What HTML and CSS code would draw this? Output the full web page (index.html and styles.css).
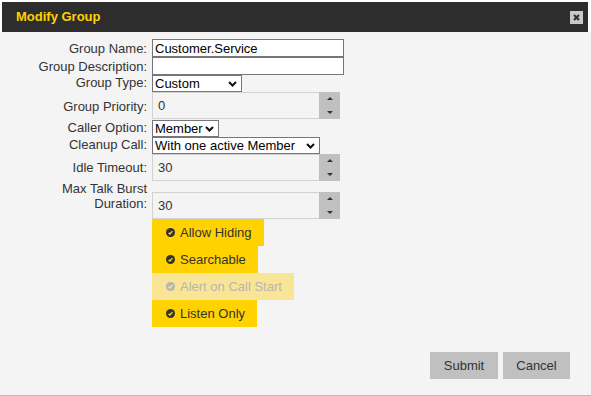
FILE: index.html
```html
<!DOCTYPE html>
<html lang="en">
<head>
    <meta charset="UTF-8">
    <title>Modify Group</title>
    <link rel="stylesheet" href="styles.css">
</head>
<body>

<div class="dialog">
    <div class="titlebar">
        <span class="title">Modify Group</span>
        <button class="close" title="Close">
            <svg width="13" height="13" viewBox="0 0 13 13"><path d="M4 4 L9 9 M9 4 L4 9" stroke="#333" stroke-width="2.2" fill="none"/></svg>
        </button>
    </div>

    <div class="content">
        <div class="form">
            <label class="lbl" for="gname">Group Name:</label>
            <div class="ctl"><input class="text" id="gname" type="text" value="Customer.Service"></div>

            <label class="lbl" for="gdesc">Group Description:</label>
            <div class="ctl"><input class="text" id="gdesc" type="text" value=""></div>

            <label class="lbl row-sel">Group Type:</label>
            <div class="ctl row-sel">
                <span class="sel sel-type">
                    <select><option>Custom</option></select>
                    <svg class="chev" width="9" height="6" viewBox="0 0 9 6"><path d="M1 1 L4.5 4.5 L8 1" stroke="#111" stroke-width="2" fill="none"/></svg>
                </span>
            </div>

            <label class="lbl">Group Priority:</label>
            <div class="ctl">
                <div class="spin spin-gap">
                    <input type="text" value="0">
                    <span class="arrows"><span><i class="up"></i></span><span><i class="down"></i></span></span>
                </div>
            </div>

            <label class="lbl row-sel">Caller Option:</label>
            <div class="ctl row-sel">
                <span class="sel sel-caller">
                    <select><option>Member</option></select>
                    <svg class="chev" width="9" height="6" viewBox="0 0 9 6"><path d="M1 1 L4.5 4.5 L8 1" stroke="#111" stroke-width="2" fill="none"/></svg>
                </span>
            </div>

            <label class="lbl row-sel">Cleanup Call:</label>
            <div class="ctl row-sel">
                <span class="sel sel-cleanup">
                    <select><option>With one active Member</option></select>
                    <svg class="chev" width="9" height="6" viewBox="0 0 9 6"><path d="M1 1 L4.5 4.5 L8 1" stroke="#111" stroke-width="2" fill="none"/></svg>
                </span>
            </div>

            <label class="lbl">Idle Timeout:</label>
            <div class="ctl">
                <div class="spin">
                    <input type="text" value="30">
                    <span class="arrows"><span><i class="up"></i></span><span><i class="down"></i></span></span>
                </div>
            </div>

            <label class="lbl lbl-two">Max Talk Burst<br>Duration:</label>
            <div class="ctl ctl-low">
                <div class="spin">
                    <input type="text" value="30">
                    <span class="arrows"><span><i class="up"></i></span><span><i class="down"></i></span></span>
                </div>
            </div>

            <div class="options">
                <div class="opt">
                    <svg class="tick" width="9" height="9" viewBox="0 0 9 9"><circle cx="4.5" cy="4.5" r="4.5" fill="#333"/><path d="M2.6 4.9 L3.9 6 L6.4 3.1" stroke="#ffd200" stroke-width="1.4" fill="none"/></svg>
                    Allow Hiding
                </div>
                <div class="opt">
                    <svg class="tick" width="9" height="9" viewBox="0 0 9 9"><circle cx="4.5" cy="4.5" r="4.5" fill="#333"/><path d="M2.6 4.9 L3.9 6 L6.4 3.1" stroke="#ffd200" stroke-width="1.4" fill="none"/></svg>
                    Searchable
                </div>
                <div class="opt off">
                    <svg class="tick" width="9" height="9" viewBox="0 0 9 9"><circle cx="4.5" cy="4.5" r="4.5" fill="#b9b6ad"/><path d="M2.6 4.9 L3.9 6 L6.4 3.1" stroke="#f9e596" stroke-width="1.4" fill="none"/></svg>
                    Alert on Call Start
                </div>
                <div class="opt">
                    <svg class="tick" width="9" height="9" viewBox="0 0 9 9"><circle cx="4.5" cy="4.5" r="4.5" fill="#333"/><path d="M2.6 4.9 L3.9 6 L6.4 3.1" stroke="#ffd200" stroke-width="1.4" fill="none"/></svg>
                    Listen Only
                </div>
            </div>
        </div>

        <div class="buttons">
            <button class="btn btn-submit">Submit</button>
            <button class="btn btn-cancel">Cancel</button>
        </div>
    </div>
</div>

</body>
</html>
```

FILE: styles.css
```css
body {
    margin: 0;
    background: #fff;
    font-family: "Liberation Sans", Arial, sans-serif;
    font-size: 13px;
    color: #333;
}

.dialog {
    width: 591px;
    height: 396px;
    display: flex;
    flex-direction: column;
}

/* dark title bar */
.titlebar {
    margin: 2px 3px 0 2px;
    height: 30px;
    background: #2d2d2d;
    display: flex;
    align-items: center;
    justify-content: space-between;
    padding: 0 5px 0 14px;
}

.title {
    color: #ffd200;
    font-weight: bold;
    font-size: 13px;
    line-height: 30px;
}

.close {
    width: 13px;
    height: 13px;
    padding: 0;
    border: none;
    background: #c9c9c9;
    display: flex;
}

.content {
    flex: 1;
    background: #f4f4f4;
    border-bottom: 1px solid #bcbcbc;
    display: flex;
    flex-direction: column;
    padding-bottom: 16px;
}

.form {
    margin-top: 7px;
    display: grid;
    grid-template-columns: 147px max-content;
    column-gap: 5px;
    align-items: center;
}

.lbl {
    text-align: right;
    line-height: 15px;
    color: #333;
}

.lbl-two {
    align-self: start;
}

.ctl {
    display: flex;
    align-items: center;
}

.row-sel {
    height: 17px;
}

.ctl-low {
    padding-top: 11px;
}

input.text {
    width: 192px;
    height: 18px;
    box-sizing: border-box;
    margin: 0;
    padding: 0 2px;
    border: 1px solid #767676;
    background: #fff;
    font-family: inherit;
    font-size: 13px;
    color: #000;
}

/* selects with the chevron drawn over them */
.sel {
    position: relative;
    display: inline-block;
}

.sel select {
    appearance: none;
    -webkit-appearance: none;
    height: 17px;
    box-sizing: border-box;
    margin: 0;
    padding: 0 0 0 2px;
    border: 1px solid #767676;
    border-radius: 0;
    background: #fff;
    font-family: inherit;
    font-size: 13px;
    line-height: 15px;
    color: #000;
    display: block;
}

.sel-type select { width: 90px; }
.sel-caller select { width: 67px; }
.sel-cleanup select { width: 168px; }

.chev {
    position: absolute;
    right: 5px;
    top: 6px;
    pointer-events: none;
}

/* number fields with grey spinner */
.spin {
    width: 188px;
    height: 27px;
    box-sizing: border-box;
    border: 1px solid #d2d2d2;
    border-right: none;
    background: #f4f4f4;
    display: flex;
}

.spin-gap {
    margin-bottom: 1px;
}

.spin input {
    flex: 1;
    min-width: 0;
    border: none;
    background: transparent;
    padding: 0 5px;
    margin: 0;
    font-family: inherit;
    font-size: 13px;
    color: #333;
    outline: none;
}

.arrows {
    width: 21px;
    margin: -1px 0;
    background: #c0c0c0;
    display: flex;
    flex-direction: column;
}

.arrows span {
    flex: 1;
    display: flex;
    align-items: center;
    justify-content: center;
}

.up {
    width: 0;
    height: 0;
    border-left: 3px solid transparent;
    border-right: 3px solid transparent;
    border-bottom: 3px solid #333;
}

.down {
    width: 0;
    height: 0;
    border-left: 3px solid transparent;
    border-right: 3px solid transparent;
    border-top: 3px solid #333;
}

/* yellow toggle options */
.options {
    grid-column: 2;
    display: flex;
    flex-direction: column;
    align-items: flex-start;
}

.opt {
    height: 27px;
    display: flex;
    align-items: center;
    gap: 5px;
    padding: 0 12px 0 14px;
    background: #ffd200;
    color: #333;
}

.opt.off {
    background: #f9e596;
    color: #b9b6ad;
}

.buttons {
    margin-top: auto;
    display: flex;
    justify-content: flex-end;
    gap: 5px;
    padding-right: 21px;
}

.btn {
    height: 27px;
    padding: 0;
    border: none;
    background: #c0c0c0;
    color: #333;
    font-family: inherit;
    font-size: 13px;
}

.btn-submit { width: 68px; }
.btn-cancel { width: 67px; }
```
